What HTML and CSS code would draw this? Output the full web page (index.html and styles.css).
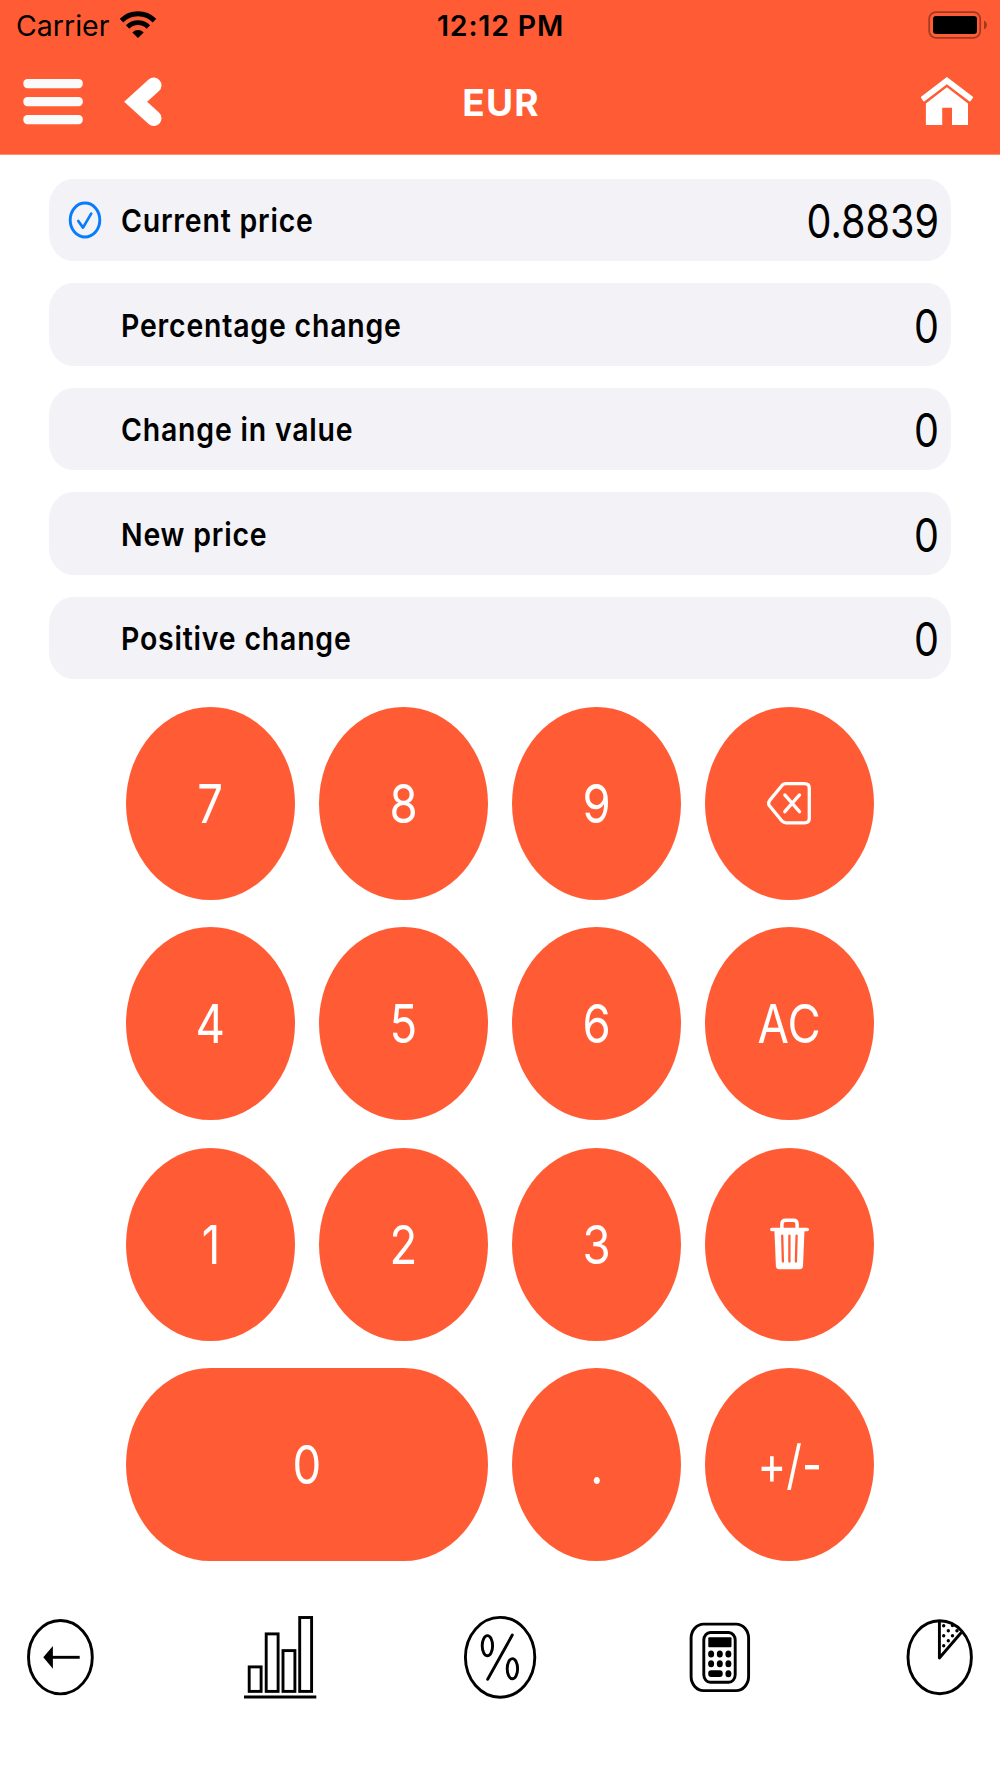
FILE: index.html
```html
<!DOCTYPE html>
<html lang="en">
<head>
<meta charset="utf-8">
<title>EUR</title>
<link rel="stylesheet" href="styles.css">
</head>
<body>
<div class="app">
  <header class="header">
    <div class="status">
      <div class="status-left">
        <span class="carrier">Carrier</span>
        <svg class="wifi" width="38" height="28" viewBox="0 0 38 28">
          <path d="M2.5 9.6a23.5 23.5 0 0 1 33 0" fill="none" stroke="#000" stroke-width="5"/>
          <path d="M8.6 16a14.7 14.7 0 0 1 20.8 0" fill="none" stroke="#000" stroke-width="4.8"/>
          <path d="M13.3 21.4a8.2 8.2 0 0 1 11.4 0L19 27z"/>
        </svg>
      </div>
      <span class="time">12:12 PM</span>
      <svg class="battery" width="60" height="28" viewBox="0 0 60 28">
        <rect x="1.2" y="1.2" width="51" height="25.6" rx="6.5" fill="none" stroke="#a23a22" stroke-width="1.7"/>
        <rect x="5" y="5" width="44" height="18" rx="3.2"/>
        <path d="M56 9.5c4 2 4 7 0 9z" fill="#a23a22"/>
      </svg>
    </div>
    <div class="nav">
      <div class="nav-left">
        <svg width="60" height="50" viewBox="0 0 60 50" fill="#fafafa">
          <rect x="0.3" y="2" width="59.5" height="9.2" rx="4.2"/>
          <rect x="0.3" y="20" width="59.5" height="9.2" rx="4.2"/>
          <rect x="0.3" y="38" width="59.5" height="9.2" rx="4.2"/>
        </svg>
        <svg width="38" height="50" viewBox="0 0 38 50">
          <path d="M29.8 8.3L11.6 24.8L29.8 41.3" fill="none" stroke="#fff" stroke-width="15.4" stroke-linecap="round"/>
        </svg>
      </div>
      <h1 class="title">EUR</h1>
      <svg class="home" width="52" height="50" viewBox="0 0 52 50" fill="#fff">
        <path d="M25.9 0L51.6 19.6Q52.3 20.2 51.8 21L49.6 24Q49 24.7 48.3 24.2L25.9 7.3L3.5 24.2Q2.8 24.7 2.2 24L0.2 21Q-0.3 20.2 0.4 19.6z"/>
        <path d="M25.9 10.3L47 26.6V48H31V30.7H21.2V48H4.9V26.6z"/>
      </svg>
    </div>
  </header>

  <main>
    <div class="fields">
      <div class="field">
        <svg width="34" height="38" viewBox="0 0 34 38" fill="none" stroke="#087cfa">
          <ellipse cx="17" cy="19" rx="14.8" ry="17" stroke-width="2.9"/>
          <path d="M10.3 20L15 26.6L23.2 12.6" stroke-width="2.7" stroke-linecap="round" stroke-linejoin="round"/>
        </svg>
        <span class="label">Current price</span><span class="value">0.8839</span>
      </div>
      <div class="field"><span class="label">Percentage change</span><span class="value">0</span></div>
      <div class="field"><span class="label">Change in value</span><span class="value">0</span></div>
      <div class="field"><span class="label">New price</span><span class="value">0</span></div>
      <div class="field"><span class="label">Positive change</span><span class="value">0</span></div>
    </div>

    <div class="keypad">
      <button class="key"><span>7</span></button>
      <button class="key"><span>8</span></button>
      <button class="key"><span>9</span></button>
      <button class="key" aria-label="Delete">
        <svg width="46" height="44" viewBox="0 0 46 44" fill="none" stroke="#fff" stroke-width="3.3" stroke-linecap="round" stroke-linejoin="round">
          <path d="M19 2.6H37.500Q42.300 2.600 42.300 7.200V37.200Q42.300 41.800 37.500 41.800H19Q16.700 41.800 15.200 40.200L2.700 25Q.5 22.200 2.700 19.400L15.200 4.200Q16.700 2.600 19 2.600z"/>
          <path d="M17.800 13.900L32.500 30.700M32.500 13.900L17.800 30.700"/>
        </svg>
      </button>
      <button class="key"><span>4</span></button>
      <button class="key"><span>5</span></button>
      <button class="key"><span>6</span></button>
      <button class="key"><span>AC</span></button>
      <button class="key"><span>1</span></button>
      <button class="key"><span>2</span></button>
      <button class="key"><span>3</span></button>
      <button class="key" aria-label="Clear">
        <svg width="40" height="52" viewBox="0.5 0 40 52">
          <path d="M12.400 11V6Q12.400 2.200 16 2.200H24Q27.600 2.200 27.600 6V11" fill="none" stroke="#fff" stroke-width="3.500"/>
          <rect x="0.500" y="9.700" width="39" height="3.600" rx="1.800" fill="#fff"/>
          <path d="M4.900 12H35L33.500 48Q33.200 51.300 30.200 51.300H9.800Q6.700 51.300 6.400 48z" fill="#fff"/>
          <path d="M12.700 17.700L13.400 43.500M19.900 17.700V43.500M27.100 17.700L26.400 43.500" fill="none" stroke="#ff5c35" stroke-width="2.300" stroke-linecap="round"/>
        </svg>
      </button>
      <button class="key wide"><span>0</span></button>
      <button class="key"><span>.</span></button>
      <button class="key sign"><span>+/-</span></button>
    </div>
  </main>

  <nav class="tabs">
    <svg viewBox="0 0 72 82">
      <ellipse cx="36.400" cy="41.200" rx="31.900" ry="36.700" class="line"/>
      <path d="M19.300 41.300L28.900 30V52.700z"/>
      <path d="M28 41.300H55.700" class="line"/>
    </svg>
    <svg viewBox="0 0 72 82">
      <g class="line">
        <rect x="5.200" y="50.900" width="11.900" height="24.500"/>
        <rect x="22.200" y="17.900" width="11.900" height="57.500"/>
        <rect x="39" y="34.600" width="11.900" height="40.800"/>
        <rect x="55.700" y="1.500" width="11.900" height="73.900"/>
        <path d="M0 81H72.300"/>
      </g>
    </svg>
    <svg viewBox="0 0 72 82">
      <g class="line">
        <ellipse cx="36.100" cy="41.300" rx="34.700" ry="39.900"/>
        <ellipse cx="23.400" cy="29.700" rx="5.200" ry="10.100"/>
        <ellipse cx="48.400" cy="52.700" rx="5.200" ry="10.100"/>
        <path d="M23.700 63.300L48.300 19" stroke-linecap="round"/>
      </g>
    </svg>
    <svg viewBox="0 0 72 82">
      <rect x="7.100" y="8.100" width="57.500" height="66.500" rx="12.500" ry="14" class="line"/>
      <rect x="19.800" y="16.500" width="31.400" height="49.800" rx="6.500" ry="7.500" class="line"/>
      <rect x="24.300" y="21.300" width="23.200" height="10" rx="1"/>
      <g>
        <ellipse cx="27.100" cy="38" rx="3" ry="3.500"/><ellipse cx="35.800" cy="38" rx="3" ry="3.500"/><ellipse cx="44.400" cy="38" rx="3" ry="3.500"/>
        <ellipse cx="27.100" cy="47.800" rx="3" ry="3.500"/><ellipse cx="35.800" cy="47.800" rx="3" ry="3.500"/><ellipse cx="44.400" cy="47.800" rx="3" ry="3.500"/>
        <rect x="24.200" y="54.300" width="14.500" height="6.800" rx="3"/><ellipse cx="44.400" cy="57.700" rx="3" ry="3.500"/>
      </g>
    </svg>
    <svg viewBox="0 0 72 82">
      <ellipse cx="35.700" cy="41.200" rx="31.700" ry="36.500" class="line"/>
      <path d="M57.500 16.300L35.400 42V5" class="line" stroke-linejoin="round"/>
      <g>
        <circle cx="39.700" cy="9.700" r="1.700"/><circle cx="48.500" cy="9.500" r="1.700"/>
        <circle cx="44.300" cy="14.700" r="1.700"/><circle cx="53" cy="14.700" r="1.700"/>
        <circle cx="39.700" cy="19.700" r="1.700"/><circle cx="48.500" cy="19.700" r="1.700"/>
        <circle cx="44.300" cy="24.700" r="1.700"/><circle cx="39.700" cy="29.700" r="1.700"/>
      </g>
    </svg>
  </nav>
</div>
</body>
</html>
```
FILE: styles.css
```css
* { box-sizing: border-box; }

body {
  margin: 0;
  background: #fff;
  color: #000;
  font-family: Inter, "Liberation Sans", sans-serif;
}

svg { display: block; flex: none; }

.app {
  width: 1000px;
  height: 1778px;
  display: flex;
  flex-direction: column;
}

/* Header */
.header {
  height: 154px;
  border-bottom: 1px solid #ff8f73;
  box-sizing: content-box;
  background: #ff5c35;
}

.status {
  height: 50px;
  padding: 0 12px;
  display: grid;
  grid-template-columns: 1fr auto 1fr;
  align-items: center;
}

.status-left { display: flex; align-items: center; gap: 10px; padding-left: 4px; }
.carrier { font-size: 28.500px; line-height: 50px; padding-top: 1px; }
.wifi { margin-bottom: 2px; }
.time {
  padding: 1px 0 0 1px;
  font-size: 28.500px;
  font-weight: 600;
  letter-spacing: .800px;
  line-height: 50px;
}
.battery { justify-self: end; margin-bottom: 2px; }

.nav {
  height: 104px;
  padding: 0 23px;
  display: grid;
  grid-template-columns: 1fr auto 1fr;
  align-items: center;
}

.home { justify-self: end; margin-right: 4px; }
.nav-left { display: flex; gap: 41px; }

.title {
  margin: 0;
  padding: 1px 0 0 2px;
  color: #fff;
  font-size: 37px;
  font-weight: 700;
  letter-spacing: 1.200px;
  line-height: 50px;
}

/* Value rows */
.fields {
  padding: 24px 49px 0;
  display: grid;
  gap: 22.300px;
}

.field {
  height: 82.200px;
  padding: 0 12px 0 19px;
  border-radius: 24px / 27px;
  background: #f2f2f7;
  display: grid;
  grid-template-columns: 53px 1fr auto;
  align-items: center;
}

.label {
  grid-column: 2;
  padding-top: 1px;
  font-size: 31.600px;
  font-weight: 600;
  letter-spacing: .900px;
  transform: scaleX(.9);
  transform-origin: left;
}

.value {
  padding-top: 2px;
  font-size: 46px;
  font-weight: 400;
  line-height: 80px;
  transform: scaleX(.86);
  transform-origin: right;
}

/* Keypad */
.keypad {
  padding: 27.800px 126px 0;
  display: grid;
  grid-template-columns: repeat(4, 169px);
  grid-auto-rows: 193px;
  gap: 27.400px 24px;
}

.key {
  border: 0;
  padding: 0;
  border-radius: 84.500px / 96.500px;
  background: #ff5c35;
  color: #fff;
  font: 400 53.600px Inter, "Liberation Sans", sans-serif;
  display: flex;
  align-items: center;
  justify-content: center;
}

.key span { transform: scaleX(.85); }
.sign span { transform: scaleX(.81); }
.wide { grid-column: span 2; }

/* Bottom tabs */
.tabs {
  padding: 55px 24px 0;
  display: flex;
  justify-content: space-between;
}

.tabs svg { width: 72px; height: 82px; overflow: visible; }
.line { fill: none; stroke: #000; stroke-width: 2.900px; }
```
